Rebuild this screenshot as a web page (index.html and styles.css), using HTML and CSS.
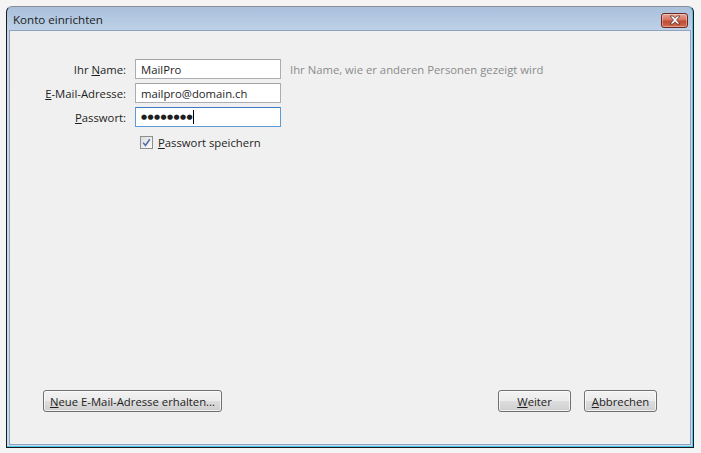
FILE: index.html
```html
<!DOCTYPE html>
<html lang="de">
<head>
    <meta charset="UTF-8">
    <title>Konto einrichten</title>
    <link rel="stylesheet" href="styles.css">
</head>
<body>
    <!-- dialog window -->
    <div class="window">
        <div class="titlebar">
            <span class="title">Konto einrichten</span>
            <button class="close" aria-label="Schliessen">
                <svg width="14" height="10" viewBox="0 0 14 10">
                    <path d="M2 1 L5 1 L7 3.2 L9 1 L12 1 L8.5 5 L12 9 L9 9 L7 6.8 L5 9 L2 9 L5.5 5 Z" fill="#fff" stroke="#5a3530" stroke-width="0.8" stroke-linejoin="round"/>
                </svg>
            </button>
        </div>

        <div class="client">
            <div class="form">
                <label class="label"><span>Ihr <u>N</u>ame:</span></label>
                <input class="field" type="text" value="MailPro">
                <span class="hint">Ihr Name, wie er anderen Personen gezeigt wird</span>

                <label class="label"><span><u>E</u>-Mail-Adresse:</span></label>
                <input class="field" type="text" value="mailpro@domain.ch">
                <span></span>

                <label class="label"><span><u>P</u>asswort:</span></label>
                <div class="field focused"><span class="dots">●●●●●●●●</span><span class="caret"></span></div>
                <span></span>

                <span></span>
                <div class="check-row">
                    <span class="checkbox">
                        <svg width="9" height="9" viewBox="0 0 9 9">
                            <path d="M1.2 4.6 L3.4 7.4 L7.8 1.2" fill="none" stroke="#4a6ea8" stroke-width="1.5"/>
                        </svg>
                    </span>
                    <span><u>P</u>asswort speichern</span>
                </div>
                <span></span>
            </div>

            <div class="buttons">
                <button class="button wide"><u>N</u>eue E-Mail-Adresse erhalten...</button>
                <div class="right">
                    <button class="button"><u>W</u>eiter</button>
                    <button class="button"><u>A</u>bbrechen</button>
                </div>
            </div>
        </div>
    </div>
</body>
</html>
```

FILE: styles.css
```css
body {
    margin: 0;
    padding: 6px 0 0 6px;
    background-color: #f4f4f4;
    font-family: 'Open Sans', sans-serif;
    font-size: 11.3px;
    color: #1e1e1e;
    box-sizing: border-box;
    height: 453px;
}

.window {
    width: 688px;
    height: 442px;
    border: 1px solid #1a1a1a;
    border-top-color: #8a8f96;
    border-radius: 6px 6px 0 0;
    background: linear-gradient(#a9c0dc, #c4d6eb 30px, #c4dcef);
    box-sizing: border-box;
    display: flex;
    flex-direction: column;
    padding: 0 1px 1px 1px;
    box-shadow: inset 0 -1px 0 #4ec6ea, inset -1px 0 0 #4ec6ea;
}

.titlebar {
    height: 23px;
    display: flex;
    align-items: center;
    justify-content: space-between;
    padding: 0 4px 0 5px;
    flex-shrink: 0;
}

.title {
    font-size: 11.6px;
    color: #1c1c1c;
    margin-top: 2px;
}

.close {
    width: 27px;
    height: 15px;
    border: 1px solid #6e2a20;
    border-radius: 3px;
    background: linear-gradient(#e6a496, #d7735f 45%, #c04a32 55%, #d06b4f);
    padding: 0;
    display: flex;
    align-items: center;
    justify-content: center;
    margin-top: 3px;
    box-shadow: inset 0 0 0 1px rgba(255, 255, 255, 0.35);
}

.client {
    flex: 1;
    background-color: #f0f0f0;
    border: 1px solid #8ea3bd;
    display: flex;
    flex-direction: column;
    margin: 0 1px 1px 1px;
}

.form {
    display: grid;
    grid-template-columns: 116px 146px auto;
    column-gap: 9px;
    row-gap: 4px;
    margin-top: 28px;
    align-items: center;
}

.label {
    text-align: right;
    white-space: nowrap;
}

.field {
    height: 20px;
    border: 1px solid #abadb3;
    border-top-color: #a0a2a8;
    background: #fff;
    box-sizing: border-box;
    font-family: 'Open Sans', sans-serif;
    font-size: 11.3px;
    color: #1e1e1e;
    padding: 0 5px;
    margin: 0;
    outline: none;
    display: flex;
    align-items: center;
}

.field.focused {
    border-color: #5b9bd8;
    border-top-color: #3d7bc2;
}

.dots {
    font-family: 'DejaVu Sans', sans-serif;
    font-size: 7px;
    letter-spacing: 0.4px;
}

.caret {
    display: inline-block;
    width: 1px;
    height: 14px;
    background: #000;
}

.hint {
    color: #8b8b8b;
    white-space: nowrap;
}

.check-row {
    display: flex;
    align-items: center;
    gap: 5px;
    padding-left: 5px;
    margin-top: 4px;
    white-space: nowrap;
}

.checkbox {
    width: 13px;
    height: 13px;
    border: 1px solid #8e8f8f;
    background: linear-gradient(135deg, #dcdcdc, #fbfbfb);
    box-sizing: border-box;
    display: flex;
    align-items: center;
    justify-content: center;
}

.buttons {
    margin-top: auto;
    margin-bottom: 32px;
    display: flex;
    justify-content: space-between;
    padding: 0 33px 0 33px;
}

.right {
    display: flex;
    gap: 13px;
}

.button {
    height: 22px;
    min-width: 73px;
    border: 1px solid #707070;
    border-radius: 3px;
    background: linear-gradient(#f2f2f2, #ebebeb 50%, #dddddd 51%, #cfcfcf);
    box-shadow: inset 0 0 0 1px rgba(255, 255, 255, 0.7);
    font-family: 'Open Sans', sans-serif;
    font-size: 11.3px;
    color: #1e1e1e;
    padding: 0 4px;
    white-space: nowrap;
    cursor: pointer;
}

.button.wide {
    width: 179px;
}
```
